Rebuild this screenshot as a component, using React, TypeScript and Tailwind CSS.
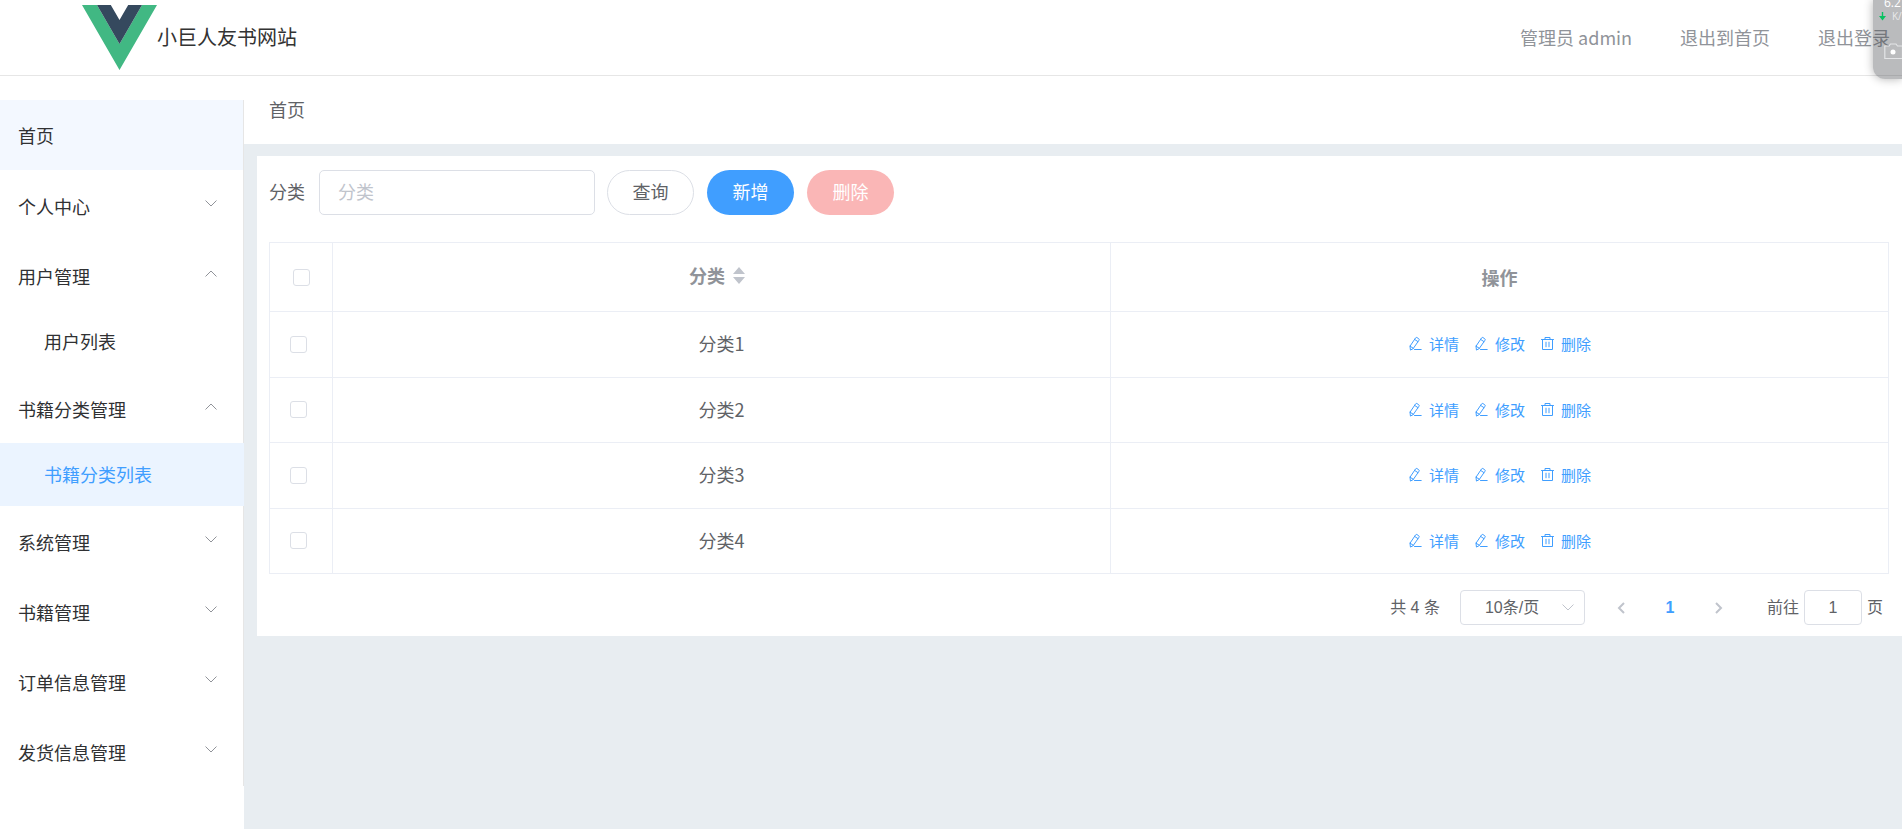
import clsx from "clsx";

type MenuItem = {
  title: string;
  open?: boolean;
  plain?: boolean;
  children?: { title: string; active?: boolean }[];
};

const menus: MenuItem[] = [
  { title: "首页", plain: true },
  { title: "个人中心" },
  { title: "用户管理", open: true, children: [{ title: "用户列表" }] },
  { title: "书籍分类管理", open: true, children: [{ title: "书籍分类列表", active: true }] },
  { title: "系统管理" },
  { title: "书籍管理" },
  { title: "订单信息管理" },
  { title: "发货信息管理" },
];

const rows = ["分类1", "分类2", "分类3", "分类4"];

const Chevron = ({ className }: { className?: string }) => (
  <svg viewBox="0 0 12 7" className={clsx("w-3 h-[7px]", className)} fill="none" stroke="currentColor" strokeWidth="1" strokeLinecap="round" strokeLinejoin="round">
    <path d="M.8.8 6 6 11.2.8" />
  </svg>
);

const EditIcon = () => (
  <svg viewBox="0 0 15 15" className="size-[15px]" fill="none" stroke="currentColor" strokeWidth="1" strokeLinecap="round" strokeLinejoin="round">
    <path d="M2.4 13.7 2 10.2 7.6 1.9Q8.2 1.1 9 1.6L10.8 2.8Q11.6 3.4 11 4.2L5.4 12.3ZM6.6 3.4 9.9 5.6M2 10.2 5.4 12.3M6.5 13.5H13.2" />
  </svg>
);

const TrashIcon = () => (
  <svg viewBox="0 0 15 15" className="size-[15px]" fill="none" stroke="currentColor" strokeWidth="1" strokeLinecap="round" strokeLinejoin="round">
    <path d="M1.5 3.5H13.5M2.5 3.5V13.5H12.5V3.5M5 3.5V1.5H10V3.5M6 6.2V10.8M9 6.2V10.8" />
  </svg>
);

const Logo = () => (
  <svg viewBox="0 0 75 65" className="w-[75px] h-[65px]">
    <path d="M0 0H15L37.5 38.9 60 0H75L37.5 65Z" fill="#41b883" />
    <path d="M15 0H28.8L37.5 15 46.2 0H60L37.5 38.9Z" fill="#35495e" />
  </svg>
);

const Header = () => (
  <header className="flex items-center justify-between h-[76px] pl-[82px] pr-3 pb-px border-b border-[#e6e6e6]">
    <div className="flex items-center">
      <Logo />
      <h1 className="text-xl text-[#333]">小巨人友书网站</h1>
    </div>
    <nav className="flex gap-12 pb-px text-lg text-[#909399]">
      <span>管理员 admin</span>
      <a href="#home">退出到首页</a>
      <a href="#logout">退出登录</a>
    </nav>
  </header>
);

const Sidebar = () => (
  <aside className="w-[244px] shrink-0 pt-6">
    <ul className="border-r border-[#e6e6e6] text-lg text-[#303133]">
      {menus.map((item) => (
        <li key={item.title}>
          {item.plain ? (
            <a href="#home" className="flex items-center h-[70px] px-[18px] pb-px bg-[#f3f8ff]">
              {item.title}
            </a>
          ) : (
            <button type="button" aria-expanded={!!item.open} className="flex items-center justify-between w-full h-[70px] pt-px pl-[18px] pr-[26px] text-left">
              {item.title}
              <Chevron className={clsx("mb-1 text-[#909399]", item.open && "rotate-180")} />
            </button>
          )}
          {item.children?.map((child) => (
            <a
              key={child.title}
              href="#list"
              className={clsx(
                "flex items-center h-[63px] pl-11 pb-0.5",
                child.active && "-mr-px bg-[#ebf4ff] text-[#409eff]"
              )}
            >
              {child.title}
            </a>
          ))}
        </li>
      ))}
    </ul>
  </aside>
);

const SearchForm = () => (
  <form className="flex items-center text-lg text-[#606266]">
    <label htmlFor="category" className="pb-[3px]">分类</label>
    <input
      id="category"
      placeholder="分类"
      className="w-[276px] h-[45px] ml-[14px] px-[18px] pb-[3px] border border-[#dcdfe6] rounded-[5px] placeholder:text-[#c0c4cc]"
    />
    <div className="flex gap-[13px] ml-3">
      <button type="button" className="w-[87px] h-[45px] pb-[3px] rounded-full border border-[#dcdfe6]">查询</button>
      <button type="button" className="w-[87px] h-[45px] pb-[3px] rounded-full bg-[#409eff] text-white">新增</button>
      <button type="button" disabled className="w-[87px] h-[45px] pb-[3px] rounded-full bg-[#fab6b6] text-white">删除</button>
    </div>
  </form>
);

const CheckBox = ({ label }: { label: string }) => (
  <input type="checkbox" aria-label={label} className="block appearance-none mx-auto size-[17px] border border-[#dcdfe6] rounded-[3px] bg-white" />
);

const SortCaret = () => (
  <svg viewBox="0 0 12 17" className="w-3 h-[17px]" fill="#c0c4cc">
    <path d="M6 0 12 7H0ZM0 10H12L6 17Z" />
  </svg>
);

const CategoryTable = () => (
  <table className="w-full h-[332px] mt-[27px] table-fixed border-collapse text-lg text-[#606266] text-center">
    <thead className="text-[#909399]">
      <tr className="h-[69px]">
        <th className="w-[63px] border border-[#ebeef5]">
          <CheckBox label="全选" />
        </th>
        <th className="pb-1 border border-[#ebeef5]">
          <button type="button" className="inline-flex items-center gap-2 pr-[9px] font-bold">
            分类
            <SortCaret />
          </button>
        </th>
        <th className="pb-px border border-[#ebeef5]">操作</th>
      </tr>
    </thead>
    <tbody>
      {rows.map((name) => (
        <tr key={name} className="h-[65px]">
          <td className="pr-[5px] border border-[#ebeef5]">
            <CheckBox label={name} />
          </td>
          <td className="pb-0.5 border border-[#ebeef5]">{name}</td>
          <td className="pb-px border border-[#ebeef5]">
            <div className="flex justify-center gap-[15px] text-[15px] text-[#409eff]">
              <button type="button" className="flex items-center gap-1.5"><EditIcon />详情</button>
              <button type="button" className="flex items-center gap-1.5"><EditIcon />修改</button>
              <button type="button" className="flex items-center gap-1.5"><TrashIcon />删除</button>
            </div>
          </td>
        </tr>
      ))}
    </tbody>
  </table>
);

const Pagination = () => (
  <div className="flex items-center justify-end h-[35px] mt-4 mb-[10px] pr-[6px] font-['Liberation_Sans','Noto_Sans_CJK_SC',sans-serif] text-base text-[#606266]">
    <span>共 4 条</span>
    <div className="relative ml-5">
      <select aria-label="每页条数" className="appearance-none w-[125px] h-[35px] pl-6 border border-[#dcdfe6] rounded">
        <option>10条/页</option>
      </select>
      <Chevron className="absolute right-[11px] top-[14px] text-[#c0c4cc] pointer-events-none" />
    </div>
    <button type="button" aria-label="上一页" className="ml-[30px] w-3 text-[#c0c4cc]">
      <svg viewBox="0 0 8 12" className="w-2 h-3 mx-auto" fill="none" stroke="currentColor" strokeWidth="2"><path d="M7 1 2 6 7 11" /></svg>
    </button>
    <button type="button" className="w-[86px] font-bold text-[#409eff]">1</button>
    <button type="button" aria-label="下一页" className="w-3 text-[#c0c4cc]">
      <svg viewBox="0 0 8 12" className="w-2 h-3 mx-auto" fill="none" stroke="currentColor" strokeWidth="2"><path d="M1 1 6 6 1 11" /></svg>
    </button>
    <label htmlFor="page" className="ml-[42px]">前往</label>
    <input id="page" defaultValue="1" className="w-[58px] h-[35px] mx-[5px] border border-[#dcdfe6] rounded text-center" />
    <span>页</span>
  </div>
);

// network speed / capture widget docked to the right edge of the screen
const FloatWidget = () => (
  <div className="absolute top-0 right-0 w-[29px] h-[79px] overflow-hidden rounded-bl-xl bg-[#43474d]/37 shadow-[0_0_10px_rgba(0,0,0,0.3)] font-['Open_Sans',sans-serif] whitespace-nowrap">
    <div className="-mt-1 pl-[11px] text-xs leading-[13px] font-medium text-white">6.2</div>
    <div className="flex items-center gap-[6px] pt-px pl-[6px] text-[10px] leading-3 text-white/70">
      <svg viewBox="0 0 7 9" className="w-[7px] h-[9px] shrink-0" fill="#07c160"><path d="M2.8 0H4.2V4H7L3.5 8.5 0 4H2.8Z" /></svg>
      K/
    </div>
    <svg viewBox="0 0 20 17" className="w-5 h-[17px] mt-[21px] ml-[11px]" fill="none" stroke="#e4e5e7" strokeWidth="1.2">
      <path d="M1.5 3H5L6.5 1H12L13.5 3H18.5V15.5H.8V3Z" />
      <circle cx="9" cy="9" r="2.5" fill="#fff" stroke="none" />
    </svg>
  </div>
);

export default function App() {
  return (
    <div className="relative flex flex-col min-h-screen bg-white overflow-hidden font-['Noto_Sans_CJK_SC',sans-serif]">
      <Header />
      <div className="flex grow">
        <Sidebar />
        <main className="grow bg-[#e8edf1]">
          <div className="flex items-center h-[68px] px-[25px] pb-0.5 bg-white text-lg text-[#606266]">首页</div>
          <section className="mt-3 ml-[13px] pt-[14px] pl-3 pr-[13px] pb-px bg-white">
            <SearchForm />
            <CategoryTable />
            <Pagination />
          </section>
        </main>
      </div>
      <FloatWidget />
    </div>
  );
}
